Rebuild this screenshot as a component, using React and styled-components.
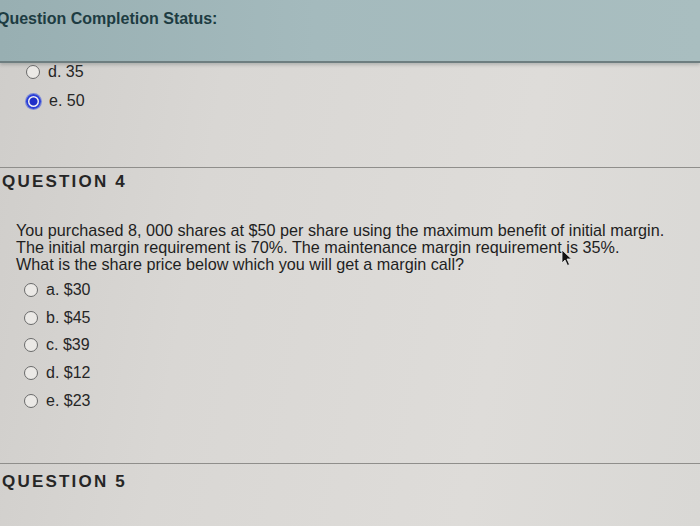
import React from 'react';
import styled, { createGlobalStyle } from 'styled-components';

const GlobalStyle = createGlobalStyle`
  html, body {
    margin: 0;
    padding: 0;
    width: 700px;
    height: 526px;
    overflow: hidden;
  }
  body {
    font-family: "Liberation Sans", Arial, sans-serif;
    background: linear-gradient(100deg, #cfcdca 0%, #d9d7d4 30%, #dedcd9 70%, #d9d8d5 100%);
  }
`;

const Page = styled.div`
  position: relative;
  width: 700px;
  height: 526px;
  color: #242424;
`;

const StatusBar = styled.div`
  height: 63px;
  background: linear-gradient(90deg, #98afb2 0%, #a4babd 45%, #a9bec0 100%);
  border-bottom: 2px solid #6e7e80;
  box-shadow: 0 2px 3px rgba(60, 70, 70, 0.25);
  padding-top: 10px;
  box-sizing: border-box;
`;

const StatusTitle = styled.div`
  margin-left: -3px;
  font-size: 16px;
  font-weight: bold;
  color: #1d3c42;
`;

const OptionList = styled.div`
  display: flex;
  flex-direction: column;
  gap: ${(p) => p.gap}px;
  padding-left: ${(p) => p.indent}px;
  padding-top: ${(p) => p.top}px;
`;

const Option = styled.label`
  display: flex;
  align-items: center;
  gap: 8px;
  font-size: 16px;
  line-height: 18px;
  color: #262626;
`;

const Radio = styled.span`
  width: 12px;
  height: 12px;
  border-radius: 50%;
  border: 1.5px solid #6a6a6a;
  background: #ebe9e6;
  box-sizing: content-box;
  flex: none;
  ${(p) =>
    p.checked &&
    `
    border: 2px solid #2a3fd8;
    width: 11px;
    height: 11px;
    background: radial-gradient(circle, #1f2fc8 0 3.5px, #f1f1f3 4.5px);
    box-shadow: 0 0 0 1px #7d8bd8;
  `}
`;

const Divider = styled.div`
  margin-top: ${(p) => p.top}px;
  border-top: 1px solid #8f8e8b;
`;

const QuestionHeading = styled.div`
  margin-top: ${(p) => p.top}px;
  margin-left: 2px;
  font-size: 17px;
  font-weight: bold;
  letter-spacing: 2.2px;
  color: #262626;
`;

const QuestionText = styled.p`
  margin: 30px 0 0 16px;
  font-size: 16.2px;
  line-height: 17px;
  letter-spacing: 0;
  white-space: nowrap;
  color: #1f1f1f;
`;

const Cursor = styled.svg`
  position: absolute;
  left: 561px;
  top: 249px;
`;

const firstOptions = [
  { label: 'd. 35' },
  { label: 'e. 50', checked: true },
];

const answerOptions = ['a. $30', 'b. $45', 'c. $39', 'd. $12', 'e. $23'];

export default function App() {
  return (
    <Page>
      <GlobalStyle />
      <StatusBar>
        <StatusTitle>Question Completion Status:</StatusTitle>
      </StatusBar>
      <OptionList indent={26} top={0} gap={11}>
        {firstOptions.map((o) => (
          <Option key={o.label}>
            <Radio checked={o.checked} />
            {o.label}
          </Option>
        ))}
      </OptionList>
      <Divider top={57} />
      <QuestionHeading top={4}>QUESTION 4</QuestionHeading>
      <QuestionText>
        You purchased 8, 000 shares at $50 per share using the maximum benefit of initial margin.
        <br />
        The initial margin requirement is 70%. The maintenance margin requirement is 35%.
        <br />
        What is the share price below which you will get a margin call?
      </QuestionText>
      <OptionList indent={24} top={8} gap={9.7}>
        {answerOptions.map((label) => (
          <Option key={label}>
            <Radio />
            {label}
          </Option>
        ))}
      </OptionList>
      <Divider top={53} />
      <QuestionHeading top={8}>QUESTION 5</QuestionHeading>
      <Cursor width="12" height="18" viewBox="0 0 12 18">
        <path d="M1 1 L1 14 L4 11 L6.5 16.5 L8.5 15.5 L6 10 L10.5 10 Z" fill="#111" stroke="#eee" strokeWidth="0.8" />
      </Cursor>
    </Page>
  );
}
